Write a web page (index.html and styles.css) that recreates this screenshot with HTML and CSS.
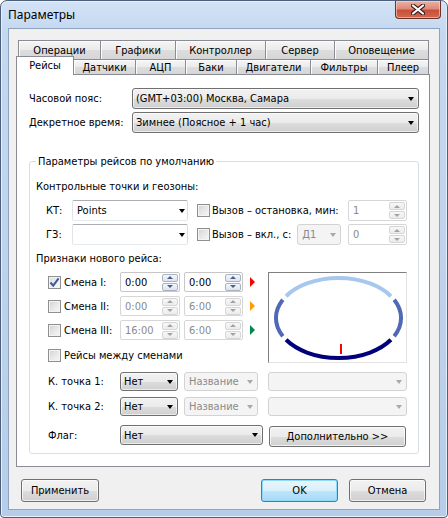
FILE: index.html
```html
<!DOCTYPE html>
<html lang="ru">
<head>
<meta charset="utf-8">
<title>Параметры</title>
<link rel="stylesheet" href="styles.css">
</head>
<body>
<div class="window">
  <div class="titlebar">
    <span class="title">Параметры</span>
    <div class="close">
      <svg width="14" height="11" viewBox="0 0 14 11"><path d="M2 1.5 L12 9.5 M12 1.5 L2 9.5" stroke="#3b1b16" stroke-width="4.2" stroke-linecap="round"/><path d="M2 1.5 L12 9.5 M12 1.5 L2 9.5" stroke="#ffffff" stroke-width="2.2" stroke-linecap="round"/></svg>
    </div>
  </div>
  <div class="client">
    <div class="tabs">
      <div class="tabrow row1">
        <div class="tab w82">Операции</div>
        <div class="tab w75">Графики</div>
        <div class="tab w90">Контроллер</div>
        <div class="tab w69">Сервер</div>
        <div class="tab w94">Оповещение</div>
      </div>
      <div class="tabrow row2">
        <div class="tab sel w57">Рейсы</div>
        <div class="tab w62">Датчики</div>
        <div class="tab w50">АЦП</div>
        <div class="tab w51">Баки</div>
        <div class="tab w74">Двигатели</div>
        <div class="tab w67">Фильтры</div>
        <div class="tab w51b">Плеер</div>
      </div>
    </div>
    <div class="panel">
      <div class="frow first">
        <span class="lbl wide">Часовой пояс:</span>
        <div class="combo grow"><span class="ctext">(GMT+03:00) Москва, Самара</span><span class="arrow"></span></div>
      </div>
      <div class="frow second">
        <span class="lbl wide">Декретное время:</span>
        <div class="combo grow"><span class="ctext">Зимнее (Поясное + 1 час)</span><span class="arrow"></span></div>
      </div>
      <fieldset class="group">
        <legend>Параметры рейсов по умолчанию</legend>
        <div class="subhead h1">Контрольные точки и геозоны:</div>
        <div class="krow kr1">
          <span class="lbl kl">КТ:</span>
          <div class="ecombo"><span class="ctext">Points</span><span class="arrow"></span></div>
          <span class="cb ml9"></span><span class="cbl">Вызов – остановка, мин:</span>
          <div class="spin dis push"><span class="stext">1</span><div class="sbtns"><span class="sb"><i class="up"></i></span><span class="sb"><i class="dn"></i></span></div></div>
        </div>
        <div class="krow kr2">
          <span class="lbl kl">ГЗ:</span>
          <div class="ecombo"><span class="ctext"></span><span class="arrow"></span></div>
          <span class="cb ml9"></span><span class="cbl">Вызов – вкл., с:</span>
          <div class="dcombo d1"><span class="ctext">Д1</span><span class="arrow"></span></div>
          <div class="spin dis push"><span class="stext">0</span><div class="sbtns"><span class="sb"><i class="up"></i></span><span class="sb"><i class="dn"></i></span></div></div>
        </div>
        <div class="subhead h2">Признаки нового рейса:</div>
        <div class="shifts">
          <div class="shiftcol">
            <div class="srow">
              <span class="cb on"><svg width="11" height="11" viewBox="0 0 11 11"><path d="M1.5 5.5 L4.2 8.6 L9.6 1.4" fill="none" stroke="#3e5a9a" stroke-width="2"/></svg></span>
              <span class="slbl">Смена I:</span>
              <div class="spin tedit"><span class="stext">0:00</span><div class="sbtns en"><span class="sb"><i class="up"></i></span><span class="sb"><i class="dn"></i></span></div></div>
              <div class="spin tedit t2"><span class="stext">0:00</span><div class="sbtns en"><span class="sb"><i class="up"></i></span><span class="sb"><i class="dn"></i></span></div></div>
              <span class="mark red"></span>
            </div>
            <div class="srow">
              <span class="cb"></span>
              <span class="slbl">Смена II:</span>
              <div class="spin tedit dis"><span class="stext">0:00</span><div class="sbtns"><span class="sb"><i class="up"></i></span><span class="sb"><i class="dn"></i></span></div></div>
              <div class="spin tedit t2 dis"><span class="stext">6:00</span><div class="sbtns"><span class="sb"><i class="up"></i></span><span class="sb"><i class="dn"></i></span></div></div>
              <span class="mark orange"></span>
            </div>
            <div class="srow">
              <span class="cb"></span>
              <span class="slbl">Смена III:</span>
              <div class="spin tedit dis"><span class="stext">16:00</span><div class="sbtns"><span class="sb"><i class="up"></i></span><span class="sb"><i class="dn"></i></span></div></div>
              <div class="spin tedit t2 dis"><span class="stext">6:00</span><div class="sbtns"><span class="sb"><i class="up"></i></span><span class="sb"><i class="dn"></i></span></div></div>
              <span class="mark green"></span>
            </div>
            <div class="brow">
              <span class="cb"></span>
              <span class="slbl">Рейсы между сменами</span>
            </div>
          </div>
          <div class="graph">
            <svg width="137" height="89" viewBox="0 0 137 89">
              <path d="M121.9 23.2 A62.5 40 0 0 0 17.1 23.2" fill="none" stroke="#a7c7ee" stroke-width="4"/>
              <path d="M13.8 26.8 A62.5 40 0 0 0 13.8 63.2" fill="none" stroke="#5068b6" stroke-width="4"/>
              <path d="M17.1 66.8 A62.5 40 0 0 0 121.9 66.8" fill="none" stroke="#00007c" stroke-width="4"/>
              <path d="M125.2 63.2 A62.5 40 0 0 0 125.2 26.8" fill="none" stroke="#5068b6" stroke-width="4"/>
              <path d="M72 71 V81" stroke="#ff0000" stroke-width="2"/>
            </svg>
          </div>
        </div>
        <div class="prow p1">
          <span class="lbl pl">К. точка 1:</span>
          <div class="combo c58"><span class="ctext">Нет</span><span class="arrow"></span></div>
          <div class="dcombo c74"><span class="ctext">Название</span><span class="arrow"></span></div>
          <div class="dcombo c139"><span class="ctext"></span><span class="arrow"></span></div>
        </div>
        <div class="prow p2">
          <span class="lbl pl">К. точка 2:</span>
          <div class="combo c58"><span class="ctext">Нет</span><span class="arrow"></span></div>
          <div class="dcombo c74"><span class="ctext">Название</span><span class="arrow"></span></div>
          <div class="dcombo c139"><span class="ctext"></span><span class="arrow"></span></div>
        </div>
        <div class="prow p3">
          <span class="lbl pl">Флаг:</span>
          <div class="combo c143"><span class="ctext">Нет</span><span class="arrow"></span></div>
          <div class="btn more">Дополнительно &gt;&gt;</div>
        </div>
      </fieldset>
    </div>
    <div class="buttons">
      <div class="btn apply">Применить</div>
      <div class="btn ok">OK</div>
      <div class="btn cancel">Отмена</div>
    </div>
  </div>
</div>
</body>
</html>
```

FILE: styles.css
```css
* { box-sizing: border-box; }
html, body { margin: 0; padding: 0; }
body {
  width: 448px;
  height: 518px;
  overflow: hidden;
  background: #ffffff;
  font-family: "DejaVu Sans Condensed", "DejaVu Sans", sans-serif;
  font-size: 11px;
  line-height: 13px;
  color: #000;
}
.window {
  width: 448px;
  height: 518px;
  border: 1px solid #4d5f7a;
  border-radius: 7px 7px 4px 4px;
  padding: 0 7px 7px 7px;
  background: linear-gradient(180deg, #d3e3f6 0%, #c4d8f0 6%, #bcd2ec 60%, #b6cde9 100%);
  box-shadow: inset 0 0 0 1px #e6eef9;
  display: flex;
  flex-direction: column;
}
.titlebar {
  height: 27px;
  display: flex;
  align-items: flex-start;
  justify-content: space-between;
}
.title {
  font-family: "Noto Sans", "Open Sans", sans-serif;
  font-size: 12px;
  line-height: 16px;
  margin-top: 6px;
  color: #000;
}
.close {
  width: 46px;
  height: 18px;
  margin-right: -1px;
  border: 1px solid #6e3128;
  border-top: none;
  border-radius: 0 0 4px 4px;
  background: linear-gradient(180deg, #eab2a6 0%, #dd8a79 45%, #c8503b 55%, #cf6a4f 100%);
  box-shadow: inset 0 0 0 1px rgba(255,220,210,0.55);
  display: flex;
  align-items: center;
  justify-content: center;
}
.client {
  flex: 1;
  border: 1px solid #8fa3bf;
  background: #f0f0f0;
  display: flex;
  flex-direction: column;
}
.tabs { margin-top: 11px; height: 34px; }
.tabrow { display: flex; align-items: flex-start; }
.row1 { height: 19px; margin-left: 9px; }
.row2 { height: 15px; margin-left: 7px; }
.tab {
  border: 1px solid #898c95;
  border-bottom: none;
  background: linear-gradient(180deg, #f5f5f5 0%, #ebebeb 50%, #dddddd 51%, #d6d6d6 100%);
  box-shadow: inset 1px 1px 0 #fcfcfc;
  text-align: center;
  margin-right: -1px;
}
.row1 .tab { height: 19px; padding-top: 3px; }
.row2 .tab { height: 15px; padding-top: 1px; }
.row2 .tab.sel {
  height: 19px;
  margin-top: -3px;
  padding-top: 2px;
  background: #ffffff;
  box-shadow: none;
  position: relative;
  z-index: 2;
}
.w82 { width: 83px; } .w75 { width: 76px; } .w90 { width: 91px; } .w69 { width: 70px; } .w94 { width: 95px; }
.w57 { width: 58px; } .w62 { width: 63px; } .w50 { width: 51px; } .w51 { width: 52px; } .w74 { width: 75px; } .w67 { width: 68px; } .w51b { width: 52px; }
.panel {
  margin-left: 7px;
  width: 414px;
  height: 393px;
  border: 1px solid #898c95;
  background: #ffffff;
  padding: 0 10px 0 12px;
}
.frow { display: flex; align-items: center; height: 21px; }
.frow.first { margin-top: 13px; }
.frow.second { margin-top: 3px; }
.lbl { white-space: nowrap; }
.lbl.wide { width: 103px; flex: none; }
.grow { flex: 1; }
.combo {
  height: 21px;
  border: 1px solid #707070;
  border-radius: 3px;
  background: linear-gradient(180deg, #f2f2f2 0%, #ebebeb 50%, #dddddd 51%, #cfcfcf 100%);
  box-shadow: inset 0 0 0 1px rgba(255,255,255,0.6);
  display: flex;
  align-items: center;
  padding: 0 4px 0 3px;
}
.ctext { flex: 1; white-space: nowrap; overflow: hidden; }
.arrow {
  width: 0; height: 0;
  border-left: 3.5px solid transparent;
  border-right: 3.5px solid transparent;
  border-top: 4px solid #000;
  margin-right: 0;
}
.group {
  margin: 22px 0 0 0;
  padding: 0 0 8px 0;
  border: 1px solid #d5dfe5;
  border-radius: 3px;
  width: 390px;
}
.group legend {
  padding: 0 2px;
  margin-left: 6px;
  line-height: 13px;
}
.subhead { margin-left: 6px; }
.subhead.h1 { margin-top: 12px; }
.subhead.h2 { margin-top: 7px; }
.krow { display: flex; align-items: center; height: 21px; padding-left: 16px; padding-right: 11px; }
.kr1 { margin-top: 7px; }
.kr2 { margin-top: 3px; }
.lbl.kl { width: 26px; flex: none; }
.ecombo {
  width: 116px; height: 21px;
  border: 1px solid #abadb3;
  border-color: #abadb3 #dbdfe6 #e3e9ef #e2e3ea;
  border-radius: 2px;
  background: #fff;
  display: flex; align-items: center;
  padding: 0 2px 0 4px;
}
.ml9 { margin-left: 9px; }
.cb {
  width: 13px; height: 13px; flex: none;
  border: 1px solid #8f8f8f;
  background: linear-gradient(135deg, #cfd1d5 0%, #e4e5e7 45%, #f7f7f7 100%);
  box-shadow: inset 0 0 0 1px #f4f4f4;
  display: inline-flex; align-items: center; justify-content: center;
}
.cb.on { background: linear-gradient(135deg, #d9dce2 0%, #eef0f3 60%, #fafafa 100%); }
.cbl { margin-left: 2px; white-space: nowrap; }
.push { margin-left: auto; }
.dcombo {
  height: 21px;
  border: 1px solid #d3d3d3;
  border-radius: 3px;
  background: #f4f4f4;
  color: #8a8a8a;
  display: flex; align-items: center;
  padding: 0 4px 0 4px;
}
.dcombo .arrow { border-top-color: #a9a9a9; }
.d1 { width: 44px; margin-left: 6px; }
.spin {
  height: 21px;
  width: 59px;
  border: 1px solid #c7c7c7;
  border-radius: 2px;
  background: #fff;
  display: flex; align-items: center;
  padding: 0 1px 0 4px;
}
.spin.dis { color: #8a8a8a; border-color: #d6d6d6; }
.stext { flex: 1; }
.sbtns { display: flex; flex-direction: column; gap: 1px; }
.sb {
  width: 16px; height: 8px;
  border: 1px solid #d6d6d6;
  border-radius: 2px;
  background: linear-gradient(180deg, #f7f7f7, #ececec);
  display: flex; align-items: center; justify-content: center;
}
.sb i { width: 0; height: 0; border-left: 3px solid transparent; border-right: 3px solid transparent; }
.sb i.up { border-bottom: 3px solid #a3a3a3; }
.sb i.dn { border-top: 3px solid #a3a3a3; }
.sbtns.en .sb { border-color: #a9b3c4; background: linear-gradient(180deg, #f4f6fa, #dde3ee); }
.sbtns.en .sb i.up { border-bottom-color: #4b5d91; }
.sbtns.en .sb i.dn { border-top-color: #4b5d91; }
.shifts { display: flex; margin-top: 7px; }
.shiftcol { padding-left: 18px; display: flex; flex-direction: column; }
.srow { display: flex; align-items: center; height: 20px; margin-bottom: 4px; }
.slbl { margin-left: 3px; width: 56px; white-space: nowrap; }
.tedit { width: 60px; height: 20px; }
.tedit.t2 { width: 59px; margin-left: 4px; }
.mark {
  width: 0; height: 0; margin-left: 7px;
  border-top: 5px solid transparent; border-bottom: 5px solid transparent;
  border-left: 5px solid #ff0000;
}
.mark.orange { border-left-color: #ff9c00; }
.mark.green { border-left-color: #008a4a; }
.brow { display: flex; align-items: center; height: 13px; margin-top: 5px; }
.graph {
  margin-left: 13px;
  width: 139px; height: 91px;
  border: 1px solid;
  border-color: #808080 #e3e3e3 #e3e3e3 #808080;
  background: #fff;
}
.graph svg { display: block; }
.prow { display: flex; align-items: center; height: 19px; padding-left: 18px; }
.p1 { margin-top: 9px; }
.p2 { margin-top: 6px; }
.p3 { margin-top: 9px; height: 20px; align-items: flex-start; }
.lbl.pl { width: 72px; flex: none; align-self: center; }
.prow .combo, .prow .dcombo { height: 19px; }
.p3 .combo { height: 20px; }
.c58 { width: 58px; }
.c74 { width: 74px; margin-left: 6px; }
.c139 { width: 139px; margin-left: 10px; }
.c143 { width: 143px; }
.btn {
  height: 23px;
  border: 1px solid #707070;
  border-radius: 3px;
  background: linear-gradient(180deg, #f2f2f2 0%, #ebebeb 50%, #dddddd 51%, #cfcfcf 100%);
  box-shadow: inset 0 0 0 1px rgba(255,255,255,0.7);
  display: flex; align-items: center; justify-content: center;
  white-space: nowrap;
}
.more { width: 137px; height: 21px; margin-left: 6px; margin-top: 1px; }
.buttons { display: flex; margin-top: 12px; }
.apply { width: 78px; margin-left: 12px; }
.ok {
  width: 77px; margin-left: 162px;
  border-color: #3c7fb1;
  background: linear-gradient(180deg, #eaf6fd 0%, #d9f0fc 50%, #bee6fd 51%, #a7d9f5 100%);
  box-shadow: inset 0 0 0 1px #8fdaf8;
}
.cancel { width: 77px; margin-left: 11px; }
```
